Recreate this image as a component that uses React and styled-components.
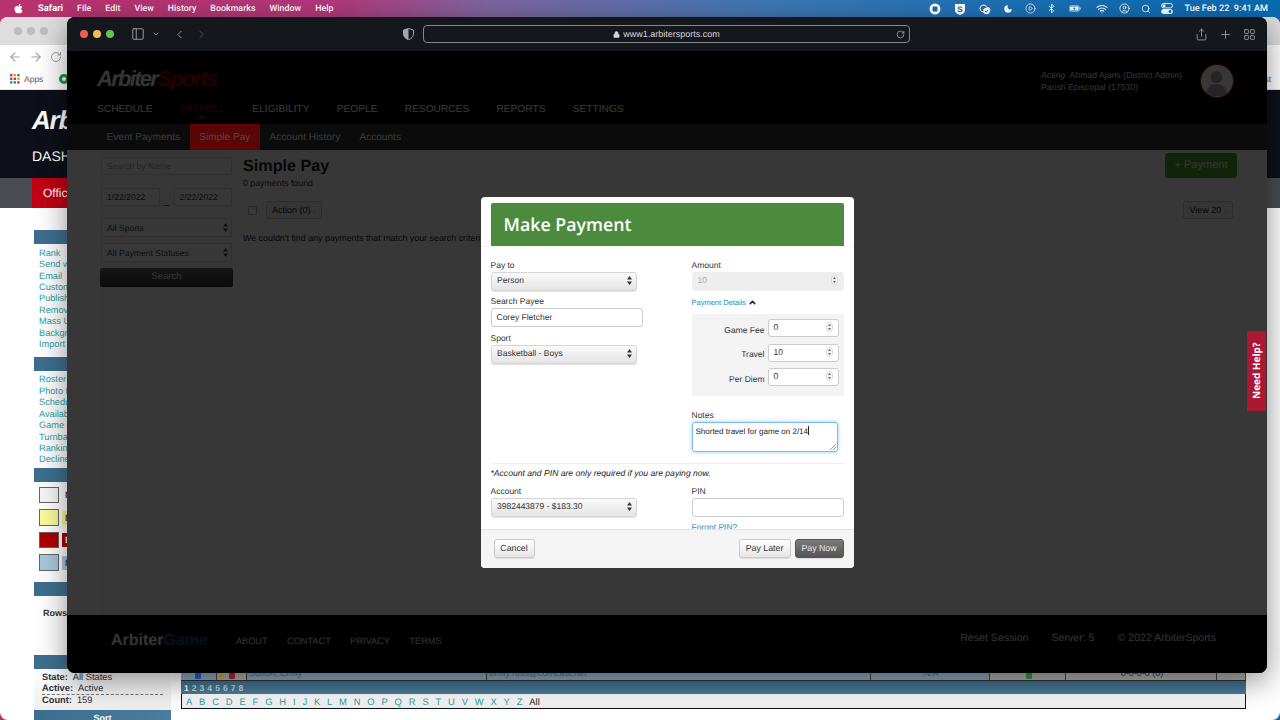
import React from 'react';
import styled, { createGlobalStyle } from 'styled-components';
import { FaApple } from 'react-icons/fa';
import {
    ArrowLeft, ArrowRight, Bluetooth, ChevronDown, ChevronLeft, ChevronRight,
    ChevronUp, CirclePlay, CircleUser, LayoutGrid, Lock, Moon, PanelLeft, Plus, RotateCw, Search, Share, Wifi
} from 'lucide-react';

const GlobalStyle = createGlobalStyle`
    * { box-sizing: border-box; }
    html, body { margin: 0; padding: 0; overflow: hidden; }
    body { font-family: "Liberation Sans", Arial, sans-serif; text-rendering: geometricPrecision; }
`;

const Desktop = styled.div`
    position: relative;
    width: 1280px;
    height: 720px;
    overflow: hidden;
    background: linear-gradient(90deg, #b8326e 0%, #b2387a 26%, #7f659f 38%, #3f78b4 60%, #1a70b4 80%, #0a6ab0 100%);
`;

const MenuBar = styled.div`
    height: 17px;
    display: flex;
    align-items: center;
    padding: 0 12px 0 13px;
    color: #fff;
    font-family: Roboto, sans-serif;
    font-size: 8.9px;
    font-weight: 500;
`;

const MenuItem = styled.span`
    margin-left: 14px;
    font-size: ${({ $bold }) => ($bold ? '9.4px' : 'inherit')};
    font-weight: ${({ $bold }) => ($bold ? 700 : 500)};
`;

const Tray = styled.div`
    margin-left: auto;
    display: flex;
    align-items: center;
`;

const TraySlot = styled.span`
    display: flex;
    width: 12px;
    justify-content: center;
    margin-left: ${({ $ml }) => $ml}px;
`;

const Clock = styled.span`
    margin-left: 11px;
    font-size: 9.1px;
    white-space: pre;
`;

/* back window, chrome */
const BackWindow = styled.div`
    position: absolute;
    left: 0;
    top: 17px;
    width: 1280px;
    height: 703px;
    border-radius: 8px;
    overflow: hidden;
    background: #fff;
    display: flex;
    flex-direction: column;
`;

const ChromeTabs = styled.div`
    height: 28px;
    flex: none;
    background: #dedede;
    display: flex;
    align-items: center;
    padding: 0 10px 0 14px;
    gap: 5px;
    color: #777;
`;

const GreyDot = styled.span`
    width: 8px;
    height: 8px;
    border-radius: 50%;
    background: #bdbdbd;
`;

const ChromeToolbar = styled.div`
    height: 23px;
    flex: none;
    background: #fff;
    display: flex;
    align-items: center;
    padding-left: 8px;
    gap: 7px;
    color: #a3a3a3;
`;

const Bookmarks = styled.div`
    height: 22px;
    flex: none;
    background: #fff;
    border-bottom: 1px solid #e5e5e5;
    display: flex;
    align-items: center;
    padding: 0 9px 0 10px;
    font-size: 8.5px;
    color: #555;
    gap: 4px;
`;

const BookmarkGreen = styled.span`
    width: 10px;
    height: 10px;
    margin-left: 12px;
    border-radius: 50%;
    border: 3px solid #1f8f55;
`;

const OtherBookmarks = styled.span`
    margin-left: auto;
`;

const BackHeader = styled.div`
    height: 88px;
    flex: none;
    background: #0d1019;
    padding: 17px 0 0 32px;
    color: #fff;
`;

const BackLogo = styled.div`
    font-size: 26px;
    font-weight: 700;
    font-style: italic;
    letter-spacing: -1.2px;
    line-height: 26px;
`;

const BackDash = styled.div`
    margin-top: 15px;
    font-size: 14px;
    line-height: 16px;
`;

const BackStrip = styled.div`
    height: 30px;
    flex: none;
    background: #484c52;
    padding-left: 32px;
`;

const BackTab = styled.div`
    display: inline-block;
    height: 30px;
    padding: 0 30px 0 11px;
    background: #c10016;
    color: #fff;
    font-size: 12px;
    line-height: 30px;
`;

const BackPage = styled.div`
    flex: 1;
    display: flex;
    padding-left: 34px;
    min-height: 0;
`;

const Side = styled.div`
    width: 137px;
    flex: none;
    padding-top: 22px;
`;

const SideHead = styled.div`
    height: 14px;
    background: linear-gradient(90deg, #3d6d8e, #4d7d9d);
    color: #fff;
    font-size: 9px;
    font-weight: 700;
    line-height: 16px;
    text-align: center;
`;

const SideLinks = styled.div`
    padding: 3.8px 0 ${({ $pb }) => $pb}px 5px;
    font-size: 9.2px;
    line-height: 11.42px;
    color: #2a9fa8;
    white-space: nowrap;
`;

const Legend = styled.div`
    padding: 5px 0 11px 5px;
    display: flex;
    flex-direction: column;
    gap: 6px;
`;

const LegendRow = styled.div`
    display: flex;
    align-items: center;
    gap: 3px;
`;

const Swatch = styled.span`
    width: 20px;
    height: 16.5px;
    background: ${({ $c }) => $c};
    border: 1px solid #666;
`;

const LegendTag = styled.span`
    padding: 2px 3px;
    font-size: 9px;
    line-height: 10px;
    font-weight: 700;
    background: ${({ $c }) => $c || 'transparent'};
    color: ${({ $fg }) => $fg || '#444'};
`;

const Rows = styled.div`
    height: 59px;
    padding: 12px 0 0 9px;
    font-size: 9px;
    font-weight: 700;
    color: #333;
`;

const Stats = styled.div`
    height: 41px;
    padding: 3px 8px 0 8px;
    font-size: 9.3px;
    line-height: 11px;
    color: #333;
    background: linear-gradient(#fff, #eee);
`;

const StatRow = styled.div`
    display: flex;
    gap: 5px;
    border-bottom: ${({ $dash }) => ($dash ? '1px dashed #777' : 'none')};
    b { font-weight: 700; }
`;

const BackMain = styled.div`
    width: 1065px;
    margin-left: 10px;
    padding-top: 458px;
`;

const TableRow = styled.div`
    height: 14px;
    display: flex;
    font-size: 9px;
    line-height: 14px;
    color: #2a7f96;
`;

const Cell = styled.div`
    width: ${({ $w }) => $w}px;
    background: ${({ $grey }) => ($grey ? '#b0b0ae' : '#8aa9bf')};
    border-right: 1px solid #444;
    padding-left: 2px;
    display: flex;
    gap: 6px;
    align-items: flex-end;
    justify-content: ${({ $center }) => ($center ? 'center' : 'flex-start')};
    color: ${({ $navy }) => ($navy ? '#1e1e78' : 'inherit')};
`;

const RowIcon = styled.span`
    width: ${({ $w }) => $w || 6}px;
    height: 6px;
    margin: 0 0 1px ${({ $ml }) => $ml || 0}px;
    border-radius: 1px;
    background: ${({ $c }) => $c};
`;

const Pager = styled.div`
    height: 14px;
    padding-left: 3px;
    background: linear-gradient(#3f6f90, #4d7d9b);
    border-top: 1px solid #333;
    font-size: 8.5px;
    font-weight: 700;
    line-height: 14px;
    color: #c9d4dc;
    word-spacing: 0.7px;
    b { color: #fff; }
`;

const Alpha = styled.div`
    height: 15px;
    border: 1px solid #111;
    border-top: none;
    background: linear-gradient(#fff, #eee);
    display: flex;
    align-items: center;
    gap: 6.85px;
    padding-left: 4px;
    font-size: 9.4px;
    color: #2a9fa8;
    span:last-child { color: #222; }
`;

/* front window, safari */
const Window = styled.div`
    position: absolute;
    left: 67px;
    top: 17px;
    width: 1200px;
    height: 656px;
    border-radius: 8px;
    overflow: hidden;
    display: flex;
    flex-direction: column;
    background: #000;
    box-shadow: 0 8px 30px rgba(0, 0, 0, 0.45);
`;

const TitleBar = styled.div`
    height: 34px;
    flex: none;
    background: #14171c;
    display: flex;
    align-items: center;
    padding-left: 13px;
    color: #9a9da2;
`;

const Light = styled.span`
    width: 8px;
    height: 8px;
    border-radius: 50%;
    margin-right: 5px;
    background: ${({ $c }) => $c};
`;

const Tool = styled.span`
    display: flex;
    margin-left: ${({ $ml }) => $ml}px;
    color: ${({ $dim }) => ($dim ? '#55585d' : '#a4a7ab')};
`;

const UrlBar = styled.div`
    width: 487px;
    height: 18px;
    margin-left: 9px;
    border: 1px solid #85878b;
    border-radius: 4px;
    display: flex;
    align-items: center;
    justify-content: center;
    gap: 3px;
    position: relative;
    color: #d9d9d9;
    font-size: 9px;
    svg:last-child { position: absolute; right: 4px; color: #a4a7ab; }
`;

const Page = styled.div`
    position: relative;
    flex: 1;
    display: flex;
    flex-direction: column;
    min-height: 0;
    background: #fff;
`;

const PageHeader = styled.div`
    height: 73px;
    flex: none;
    background: #000;
    padding: 18px 33px 0 30px;
    display: flex;
    justify-content: space-between;
`;

const Logo = styled.div`
    font-size: 22px;
    font-weight: 700;
    font-style: italic;
    letter-spacing: -1.7px;
    line-height: 20px;
    color: #f2f2f2;
    span { color: #a80000; }
`;

const Nav = styled.div`
    display: flex;
    gap: 27.2px;
    margin-top: 14px;
`;

const NavItem = styled.span`
    position: relative;
    font-size: 10.2px;
    line-height: 14px;
    color: ${({ $active }) => ($active ? '#c40000' : '#fff')};
    &::after {
        content: '';
        display: ${({ $active }) => ($active ? 'block' : 'none')};
        position: absolute;
        left: 50%;
        top: 11px;
        margin-left: -5px;
        border: 5px solid transparent;
        border-top: none;
        border-bottom-color: #333;
    }
`;

const UserBlock = styled.div`
    display: flex;
    gap: 18px;
    margin-top: -5px;
`;

const UserText = styled.div`
    padding-top: 5px;
    font-size: 8.7px;
    line-height: 12px;
    color: #e6e6e6;
    i { font-style: italic; }
`;

const Avatar = styled.div`
    width: 34px;
    height: 34px;
    border-radius: 50%;
    border: 1.5px solid #d80000;
    background: #fff;
    overflow: hidden;
    color: #aaa;
`;

const SubNav = styled.div`
    height: 26px;
    flex: none;
    background: #333;
    display: flex;
    padding-left: 30px;
`;

/* the active tab stays lit through the backdrop, as it does in the app */
const SubItem = styled.span`
    padding: 0 9.6px;
    font-size: 10.1px;
    line-height: 27px;
    position: ${({ $active }) => ($active ? 'relative' : 'static')};
    z-index: ${({ $active }) => ($active ? 1 : 'auto')};
    color: ${({ $active }) => ($active ? '#5e4343' : '#fff')};
    background: ${({ $active }) => ($active ? '#5a0606' : 'transparent')};
`;

const Content = styled.div`
    flex: 1;
    min-height: 0;
    display: flex;
    padding: 0 30px 0 33px;
    background: #fff;
`;

const Filters = styled.div`
    width: 133px;
    flex: none;
    padding: 7px 1px 0;
    display: flex;
    flex-direction: column;
    background: #f7f7f7;
`;

const Filter = styled.div`
    height: ${({ $h }) => $h || 19}px;
    margin-top: ${({ $mt }) => $mt || 0}px;
    flex: ${({ $grow }) => ($grow ? 1 : 'none')};
    border: 1px solid #ddd;
    border-radius: 2px;
    background: #fff;
    padding-left: 5px;
    display: flex;
    align-items: center;
    justify-content: space-between;
    font-size: 8.6px;
    color: ${({ $faint }) => ($faint ? '#aaa' : '#444')};
    svg { margin-right: 3px; }
`;

const DateRow = styled.div`
    display: flex;
    align-items: flex-end;
    gap: 3px;
    margin-top: 13px;
    font-size: 9px;
    color: #222;
    span { width: 8px; text-align: center; }
`;

const SearchBtn = styled.div`
    margin: 6px -1px 0;
    height: 19px;
    border-radius: 2px;
    background: linear-gradient(#666, #333);
    color: #eee;
    font-size: 9.5px;
    line-height: 18px;
    text-align: center;
`;

const Main = styled.div`
    flex: 1;
    margin-left: 10px;
    padding-top: 3px;
`;

const MainHead = styled.div`
    display: flex;
    justify-content: space-between;
`;

const Title = styled.h1`
    margin: 2px 0 0;
    font-size: 16.2px;
    font-weight: 700;
    line-height: 22px;
    color: #222;
`;

const Sub = styled.div`
    font-size: 8.8px;
    line-height: 12px;
    color: #333;
`;

const PayBtn = styled.div`
    width: 72px;
    height: 25px;
    border-radius: 3px;
    background: #4fa82a;
    color: #eee;
    font-size: 11px;
    line-height: 25px;
    text-align: center;
`;

const ActionRow = styled.div`
    display: flex;
    align-items: center;
    margin-top: 12px;
    padding: 0 4px 0 5px;
`;

const Check = styled.span`
    width: 9px;
    height: 9px;
    border: 1px solid #bbb;
    border-radius: 1px;
    background: #fff;
`;

const SmallBtn = styled.div`
    height: 18px;
    margin-left: ${({ $ml }) => $ml || 0}px;
    padding: 0 4px 0 5px;
    border: 1px solid #ccc;
    border-radius: 2px;
    background: #f5f5f5;
    color: #222;
    font-size: 9px;
    line-height: 16px;
    &::after { content: ' ⌄'; color: #999; font-size: 6px; }
`;

const Empty = styled.div`
    margin-top: 13px;
    font-size: 8.9px;
    line-height: 12px;
    color: #222;
    white-space: nowrap;
`;

const Footer = styled.div`
    height: 58px;
    flex: none;
    background: #000;
    padding: 0 51px 7px 44px;
    display: flex;
    align-items: center;
    color: #e6e6e6;
    font-size: 9.2px;
`;

const FootLogo = styled.span`
    font-size: 16px;
    font-weight: 700;
    margin-right: 28px;
    color: #eee;
    span { color: #125a88; }
`;

const FootLinks = styled.div`
    display: flex;
    gap: 19.5px;
`;

const FootRight = styled.div`
    margin: -6px 0 0 auto;
    display: flex;
    gap: 23px;
    font-size: 10.6px;
`;

const Overlay = styled.div`
    position: absolute;
    inset: 0;
    background: rgba(0, 0, 0, 0.784);
    display: flex;
    justify-content: center;
    align-items: flex-start;
    padding-top: 146px;
`;

const NeedHelp = styled.div`
    position: absolute;
    right: 1px;
    top: 280px;
    width: 19px;
    height: 80px;
    background: #ab1832;
    border-radius: 2px 0 0 2px;
    color: #fff;
    font-family: "Open Sans", sans-serif;
    font-size: 10px;
    font-weight: 700;
    writing-mode: vertical-rl;
    transform: rotate(180deg);
    text-align: center;
    line-height: 19px;
`;

const Modal = styled.div`
    width: 373px;
    height: 371px;
    background: #fff;
    border-radius: 4px;
    overflow: hidden;
    display: flex;
    flex-direction: column;
    color: #333;
    font-size: 8.5px;
`;

const ModalHead = styled.div`
    flex: none;
    height: 43px;
    margin: 6px 10px 0;
    padding-left: 13px;
    background: #4c8b3d;
    border-radius: 2px 2px 0 0;
    color: #fff;
    font-family: "Open Sans", sans-serif;
    font-size: 17.8px;
    font-weight: 600;
    line-height: 44px;
`;

const ModalBody = styled.div`
    flex: 1;
    min-height: 0;
    overflow: hidden;
    padding: 12.5px 10px 0;
    border-top: 1px solid #f0f5ee;
`;

const Columns = styled.div`
    display: grid;
    grid-template-columns: 201px 152px;
`;

const Group = styled.div`
    margin-bottom: 5.5px;
`;

const Label = styled.div`
    height: 11px;
    margin-bottom: 1px;
    line-height: 11px;
`;

const SelectBox = styled.div`
    width: 146px;
    height: 19px;
    padding: 0 4px 2px 5.5px;
    border: 1px solid #d5d5d5;
    border-radius: 3px;
    background: linear-gradient(#fafafa, #e4e4e4);
    box-shadow: 0 1px 1px rgba(0, 0, 0, 0.12);
    display: flex;
    align-items: center;
    justify-content: space-between;
    color: #333;
`;

const TextBox = styled.div`
    width: ${({ $w }) => $w || 152}px;
    height: ${({ $h }) => $h || 19}px;
    padding: 0 5px 1.5px;
    border: 1px solid ${({ $disabled }) => ($disabled ? '#eee' : '#ccc')};
    border-radius: 3px;
    background: ${({ $disabled }) => ($disabled ? '#eee' : '#fff')};
    display: flex;
    align-items: center;
    justify-content: space-between;
    color: ${({ $disabled }) => ($disabled ? '#aaa' : '#333')};
`;

const DetailsLink = styled.div`
    height: 11px;
    margin-top: 6.5px;
    display: flex;
    align-items: center;
    gap: 2px;
    color: #1f8db5;
    font-size: 7.5px;
    svg { color: #222; }
`;

const DetailsBox = styled.div`
    height: 82px;
    margin-top: 6px;
    padding: 5px 5px 0 0;
    background: #f3f3f3;
    border-radius: 2px;
    display: flex;
    flex-direction: column;
    gap: 6.5px;
`;

const DetailRow = styled.div`
    display: flex;
    align-items: center;
    justify-content: flex-end;
    gap: 3px;
    span { padding-top: 3px; }
`;

const Notes = styled.div`
    position: relative;
    width: 146px;
    height: 30px;
    margin-top: 1.5px;
    padding: 3px;
    border: 1px solid #7dbce6;
    border-radius: 3px;
    box-shadow: 0 0 4px rgba(82, 168, 236, 0.6);
    line-height: 10px;
    font-size: 8px;
    color: #222;
`;

const Caret = styled.span`
    display: inline-block;
    width: 1px;
    height: 9px;
    vertical-align: -1px;
    background: #222;
`;

const Grip = styled.svg`
    position: absolute;
    right: 1px;
    bottom: 1px;
`;

const Divider = styled.hr`
    margin: 11px 0 3.5px;
    border: none;
    border-top: 1px solid #eee;
`;

const NoteLine = styled.div`
    height: 11px;
    margin-bottom: 7px;
    line-height: 11px;
    font-size: 8.6px;
    font-style: italic;
    color: #222;
`;

const ForgotLink = styled.div`
    margin-top: 5.5px;
    color: #1f8db5;
    font-size: 8.5px;
    line-height: 11px;
`;

const ModalFoot = styled.div`
    flex: none;
    height: 39px;
    padding: 0 10px 1.5px 13px;
    background: #f5f5f5;
    border-top: 1px solid #e5e5e5;
    display: flex;
    align-items: center;
    gap: 4px;
`;

const Button = styled.div`
    height: 19.5px;
    width: ${({ $w }) => $w}px;
    margin-left: ${({ $auto }) => ($auto ? 'auto' : 0)};
    border: 1px solid ${({ $dark }) => ($dark ? '#555' : '#ccc')};
    border-radius: 3px;
    background: ${({ $dark }) => ($dark ? 'linear-gradient(#7b7b7b, #555)' : 'linear-gradient(#fff, #e6e6e6)')};
    color: ${({ $dark }) => ($dark ? '#e8e8e8' : '#333')};
    box-shadow: 0 1px 1px rgba(0, 0, 0, 0.1);
    font-size: 8.8px;
    line-height: 17.5px;
    text-align: center;
`;

const UpDown = () => (
    <svg width="5" height="9" viewBox="0 0 5 9"><path d="M2.5 0L5 3.5H0zM2.5 9L0 5.5h5z" fill="currentColor" /></svg>
);

const Spinner = () => (
    <svg width="7" height="10" viewBox="0 0 7 10">
        <rect x="0.5" y="0.5" width="6" height="9" rx="3" fill="#f4f4f4" stroke="#ccc" strokeWidth="0.6" />
        <path d="M3.5 2L5 4H2zM3.5 8L2 6h3z" fill="#666" />
    </svg>
);

const StopIcon = () => (
    <svg width="12" height="12" viewBox="0 0 12 12"><circle cx="6" cy="6" r="5.5" fill="#fff" /><rect x="3.6" y="3.6" width="4.8" height="4.8" rx="1" fill="#1a6aa8" /></svg>
);

const ShieldS = () => (
    <svg width="12" height="12" viewBox="0 0 12 12">
        <path d="M1 1h10v6.5C11 10 8 11.2 6 12 4 11.2 1 10 1 7.5z" fill="#fff" />
        <text x="6" y="8.6" textAnchor="middle" fontSize="8" fontWeight="700" fill="#1a6aa8" fontFamily="Liberation Sans">S</text>
    </svg>
);

const CloudCheck = () => (
    <svg width="14" height="12" viewBox="0 0 24 22">
        <path d="M17.5 17H9a7 7 0 1 1 6.7-9h1.8a4.5 4.5 0 1 1 0 9Z" fill="none" stroke="#fff" strokeWidth="2" />
        <circle cx="15" cy="15" r="6.5" fill="#fff" />
        <path d="M12 15l2.2 2.2 4-4" fill="none" stroke="#1a6aa8" strokeWidth="2" />
    </svg>
);

const Battery = () => (
    <svg width="17" height="9" viewBox="0 0 17 9">
        <rect x="0.4" y="0.4" width="14.2" height="8.2" rx="2" fill="none" stroke="#fff" strokeWidth="0.7" />
        <rect x="1.5" y="1.5" width="12" height="6" rx="1" fill="#fff" />
        <rect x="15.2" y="3" width="1.2" height="3" rx="0.6" fill="#fff" />
        <path d="M8.2 1.6L5.4 5h2l-.9 2.6L9.6 4H7.5z" fill="#1a6aa8" />
    </svg>
);

const ControlCenter = () => (
    <svg width="12" height="11" viewBox="0 0 12 11">
        <rect x="0.5" y="0.5" width="11" height="4.4" rx="2.2" fill="none" stroke="#fff" strokeWidth="0.9" />
        <circle cx="3" cy="2.7" r="1.5" fill="#fff" />
        <rect x="0.2" y="6" width="11.6" height="5" rx="2.5" fill="#fff" />
        <circle cx="9" cy="8.5" r="1.4" fill="#1a6aa8" />
    </svg>
);

const HalfShield = () => (
    <svg width="11" height="12" viewBox="0 0 11 12">
        <path d="M5.5 .5L10.5 2v4c0 3-2.5 4.8-5 5.7C3 10.8.5 9 .5 6V2z" fill="none" stroke="#a4a7ab" />
        <path d="M5.5 .5L.5 2v4c0 3 2.5 4.8 5 5.7z" fill="#a4a7ab" />
    </svg>
);

const AppsIcon = () => (
    <svg width="10" height="10" viewBox="0 0 10 10">
        {['#d33', '#e8a020', '#2a9d4e', '#3a6fd8', '#d33', '#e8a020', '#2a9d4e', '#3a6fd8', '#d33'].map((c, i) => (
            <rect key={i} x={(i % 3) * 3.6} y={Math.floor(i / 3) * 3.6} width="2.4" height="2.4" fill={c} />
        ))}
    </svg>
);

const menuItems = ['File', 'Edit', 'View', 'History', 'Bookmarks', 'Window', 'Help'];
const trayIcons = [
    { el: <StopIcon />, ml: 0 },
    { el: <ShieldS />, ml: 13 },
    { el: <CloudCheck />, ml: 13 },
    { el: <Moon size={10} fill="#fff" strokeWidth={0} />, ml: 11 },
    { el: <CirclePlay size={11} strokeWidth={1.6} />, ml: 10 },
    { el: <Bluetooth size={11} strokeWidth={2} />, ml: 9 },
    { el: <Battery />, ml: 12 },
    { el: <Wifi size={12} strokeWidth={2.2} />, ml: 15 },
    { el: <CircleUser size={11} strokeWidth={1.8} />, ml: 10 },
    { el: <Search size={10} strokeWidth={2} />, ml: 10 },
    { el: <ControlCenter />, ml: 9 },
];

const navItems = ['SCHEDULE', 'PAYROLL', 'ELIGIBILITY', 'PEOPLE', 'RESOURCES', 'REPORTS', 'SETTINGS'];
const subItems = ['Event Payments', 'Simple Pay', 'Account History', 'Accounts'];
const linksOne = ['Rank', 'Send welcome', 'Email', 'Custom fields', 'Publish', 'Remove', 'Mass Update', 'Background', 'Import'];
const linksTwo = ['Roster', 'Photo Report', 'Schedule', 'Availability', 'Game count', 'Turnback', 'Rankings', 'Declined'];
const letters = 'ABCDEFGHIJKLMNOPQRSTUVWXYZ'.split('').concat('All');

const NumberField = ({ label, value }) => (
    <DetailRow>
        <span>{label}</span>
        <TextBox $w={71} $h={18}>{value}<Spinner /></TextBox>
    </DetailRow>
);

const BackBrowser = () => (
    <BackWindow>
        <ChromeTabs>
            <GreyDot /><GreyDot /><GreyDot />
        </ChromeTabs>
        <ChromeToolbar>
            <ArrowLeft size={14} /><ArrowRight size={14} /><RotateCw size={12} />
        </ChromeToolbar>
        <Bookmarks>
            <AppsIcon /> Apps <BookmarkGreen />
            <OtherBookmarks>Reading List</OtherBookmarks>
        </Bookmarks>
        <BackHeader>
            <BackLogo>Arb</BackLogo>
            <BackDash>DASHBOARD</BackDash>
        </BackHeader>
        <BackStrip><BackTab>Officials</BackTab></BackStrip>
        <BackPage>
            <Side>
                <SideHead />
                <SideLinks $pb={6}>{linksOne.map(l => <div key={l}>{l}</div>)}</SideLinks>
                <SideHead />
                <SideLinks $pb={2}>{linksTwo.map(l => <div key={l}>{l}</div>)}</SideLinks>
                <SideHead />
                <Legend>
                    <LegendRow><Swatch $c="#f6f6f6" /><LegendTag>N</LegendTag></LegendRow>
                    <LegendRow><Swatch $c="#fbfb9c" /><LegendTag $c="#fbfb9c">N</LegendTag></LegendRow>
                    <LegendRow><Swatch $c="#ad0000" /><LegendTag $c="#ad0000" $fg="#fff">D</LegendTag></LegendRow>
                    <LegendRow><Swatch $c="#a8c8de" /><LegendTag $c="#a8c8de">N</LegendTag></LegendRow>
                </Legend>
                <SideHead />
                <Rows>Rows</Rows>
                <SideHead />
                <Stats>
                    <StatRow><b>State:</b> All States</StatRow>
                    <StatRow $dash><b>Active:</b> Active</StatRow>
                    <StatRow><b>Count:</b> 159</StatRow>
                </Stats>
                <SideHead>Sort</SideHead>
            </Side>
            <BackMain>
                <TableRow>
                    <Cell $w={36}><RowIcon $c="#1f5fc4" $ml={12} /></Cell>
                    <Cell $w={30} $grey><RowIcon $c="#d9a441" $w={4} /><RowIcon $c="#c0202a" /></Cell>
                    <Cell $w={240}>Sutton, Emily</Cell>
                    <Cell $w={384}>emily.ross@comcast.net</Cell>
                    <Cell $w={119} $center>N/A</Cell>
                    <Cell $w={76} $grey $center><RowIcon $c="#2f9a3a" /></Cell>
                    <Cell $w={151} $grey $navy $center>0-0-0-0 (0)</Cell>
                    <Cell $w={29} $grey />
                </TableRow>
                <Pager><b>1</b> 2 3 4 5 6 7 8</Pager>
                <Alpha>{letters.map(l => <span key={l}>{l}</span>)}</Alpha>
            </BackMain>
        </BackPage>
    </BackWindow>
);

export default function App() {
    return (
        <Desktop>
            <GlobalStyle />
            <MenuBar>
                <FaApple size={11} />
                <MenuItem $bold>Safari</MenuItem>
                {menuItems.map(m => <MenuItem key={m}>{m}</MenuItem>)}
                <Tray>
                    {trayIcons.map((t, i) => <TraySlot key={i} $ml={t.ml}>{t.el}</TraySlot>)}
                    <Clock>Tue Feb 22  9:41 AM</Clock>
                </Tray>
            </MenuBar>
            <BackBrowser />
            <Window>
                <TitleBar>
                    <Light $c="#ed5f56" /><Light $c="#f5bd4f" /><Light $c="#61c454" />
                    <Tool $ml={12}><PanelLeft size={14} strokeWidth={1.5} /></Tool>
                    <Tool $ml={7}><ChevronDown size={8} strokeWidth={2.5} /></Tool>
                    <Tool $ml={13}><ChevronLeft size={13} strokeWidth={1.6} /></Tool>
                    <Tool $ml={9} $dim><ChevronRight size={13} strokeWidth={1.6} /></Tool>
                    <Tool $ml={195}><HalfShield /></Tool>
                    <UrlBar>
                        <Lock size={7} fill="#d9d9d9" />
                        www1.arbitersports.com
                        <RotateCw size={9} />
                    </UrlBar>
                    <Tool $ml={285}><Share size={13} strokeWidth={1.5} /></Tool>
                    <Tool $ml={11}><Plus size={13} strokeWidth={1.5} /></Tool>
                    <Tool $ml={11}><LayoutGrid size={13} strokeWidth={1.5} /></Tool>
                </TitleBar>
                <Page>
                    <PageHeader>
                        <div>
                            <Logo>Arbiter<span>Sports</span></Logo>
                            <Nav>
                                {navItems.map(n => <NavItem key={n} $active={n === 'PAYROLL'}>{n}</NavItem>)}
                            </Nav>
                        </div>
                        <UserBlock>
                            <UserText>
                                <i>Acting:</i> Ahmad Ajami (District Admin)<br />
                                Parish Episcopal (17530)
                            </UserText>
                            <Avatar>
                                <svg width="31" height="31" viewBox="0 0 31 31">
                                    <circle cx="15.5" cy="12" r="6" fill="currentColor" />
                                    <path d="M5 31c0-9 5-12 10.5-12S26 22 26 31z" fill="currentColor" />
                                </svg>
                            </Avatar>
                        </UserBlock>
                    </PageHeader>
                    <SubNav>
                        {subItems.map(s => <SubItem key={s} $active={s === 'Simple Pay'}>{s}</SubItem>)}
                    </SubNav>
                    <Content>
                        <Filters>
                            <Filter $h={18} $faint>Search by Name</Filter>
                            <DateRow>
                                <Filter $h={18} $grow>1/22/2022</Filter>
                                <span>_</span>
                                <Filter $h={18} $grow>2/22/2022</Filter>
                            </DateRow>
                            <Filter $mt={12}>All Sports<UpDown /></Filter>
                            <Filter $mt={6}>All Payment Statuses<UpDown /></Filter>
                            <SearchBtn>Search</SearchBtn>
                        </Filters>
                        <Main>
                            <MainHead>
                                <div>
                                    <Title>Simple Pay</Title>
                                    <Sub>0 payments found</Sub>
                                </div>
                                <PayBtn>+ Payment</PayBtn>
                            </MainHead>
                            <ActionRow>
                                <Check />
                                <SmallBtn $ml={9}>Action (0)</SmallBtn>
                                <SmallBtn style={{ marginLeft: 'auto' }}>View 20</SmallBtn>
                            </ActionRow>
                            <Empty>We couldn't find any payments that match your search criteria.</Empty>
                        </Main>
                    </Content>
                    <Footer>
                        <FootLogo>Arbiter<span>Game</span></FootLogo>
                        <FootLinks>
                            <span>ABOUT</span><span>CONTACT</span><span>PRIVACY</span><span>TERMS</span>
                        </FootLinks>
                        <FootRight>
                            <span>Reset Session</span><span>Server: 5</span><span>© 2022 ArbiterSports</span>
                        </FootRight>
                    </Footer>
                    <Overlay>
                        <Modal>
                            <ModalHead>Make Payment</ModalHead>
                            <ModalBody>
                                <Columns>
                                    <div>
                                        <Group>
                                            <Label>Pay to</Label>
                                            <SelectBox>Person<UpDown /></SelectBox>
                                        </Group>
                                        <Group>
                                            <Label>Search Payee</Label>
                                            <TextBox>Corey Fletcher</TextBox>
                                        </Group>
                                        <Group>
                                            <Label>Sport</Label>
                                            <SelectBox>Basketball - Boys<UpDown /></SelectBox>
                                        </Group>
                                    </div>
                                    <div>
                                        <Group>
                                            <Label>Amount</Label>
                                            <TextBox $disabled>10<Spinner /></TextBox>
                                        </Group>
                                        <DetailsLink>Payment Details <ChevronUp size={9} strokeWidth={4} /></DetailsLink>
                                        <DetailsBox>
                                            <NumberField label="Game Fee" value="0" />
                                            <NumberField label="Travel" value="10" />
                                            <NumberField label="Per Diem" value="0" />
                                        </DetailsBox>
                                        <Label style={{ marginTop: 13.5 }}>Notes</Label>
                                        <Notes>
                                            Shorted travel for game on 2/14<Caret />
                                            <Grip width="6" height="6" viewBox="0 0 6 6">
                                                <path d="M0 6L6 0M3 6L6 3" stroke="#777" strokeWidth="0.7" />
                                            </Grip>
                                        </Notes>
                                    </div>
                                </Columns>
                                <Divider />
                                <NoteLine>*Account and PIN are only required if you are paying now.</NoteLine>
                                <Columns>
                                    <div>
                                        <Label>Account</Label>
                                        <SelectBox>3982443879 - $183.30<UpDown /></SelectBox>
                                    </div>
                                    <div>
                                        <Label>PIN</Label>
                                        <TextBox />
                                        <ForgotLink>Forgot PIN?</ForgotLink>
                                    </div>
                                </Columns>
                            </ModalBody>
                            <ModalFoot>
                                <Button $w={41}>Cancel</Button>
                                <Button $w={52} $auto>Pay Later</Button>
                                <Button $w={49} $dark>Pay Now</Button>
                            </ModalFoot>
                        </Modal>
                    </Overlay>
                    <NeedHelp>Need Help?</NeedHelp>
                </Page>
            </Window>
        </Desktop>
    );
}
